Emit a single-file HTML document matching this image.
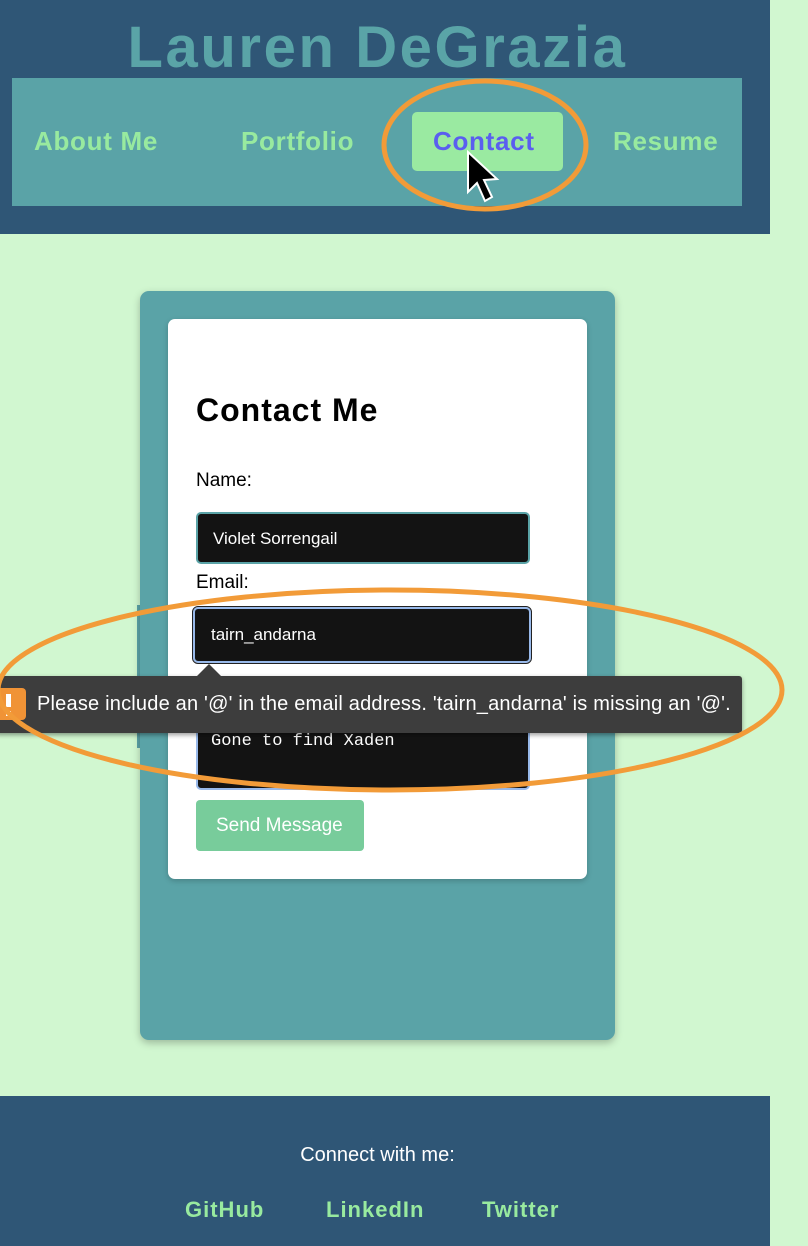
<!DOCTYPE html>
<html><head><style>
*{margin:0;padding:0;box-sizing:border-box}
body{width:808px;height:1246px;background:#d1f7d0;position:relative;overflow:hidden;font-family:"Liberation Sans",sans-serif}
.a{position:absolute}
.nav{font-weight:bold;font-size:26px;color:#98ea9f;top:126px;letter-spacing:0.7px}
.box{background:#131313;color:#fff;border-radius:5px}
.ft{color:#98ea9f;font-weight:bold;font-size:22px;letter-spacing:1px;top:1197px}
</style></head><body>
<div class="a" style="left:0;top:0;width:770px;height:234px;background:#2f5676"></div>
<div class="a" style="left:0;width:755px;top:14px;text-align:center;font-size:58px;font-weight:bold;color:#5aa4a7;letter-spacing:2.6px">Lauren DeGrazia</div>
<div class="a" style="left:12px;top:78px;width:730px;height:128px;background:#5aa3a7"></div>
<div class="a nav" style="left:34px">About Me</div>
<div class="a nav" style="left:241px">Portfolio</div>
<div class="a" style="left:412px;top:112px;width:151px;height:59px;background:#9aeaa1;border-radius:5px"></div>
<div class="a nav" style="left:433px;color:#5a5ef0">Contact</div>
<div class="a nav" style="left:613px">Resume</div>

<div class="a" style="left:137px;top:605px;width:30px;height:143px;background:#5aa3a7"></div>
<div class="a" style="left:140px;top:291px;width:475px;height:749px;background:#5aa3a7;border-radius:9px;box-shadow:0 3px 8px rgba(0,0,0,.25)"></div>
<div class="a" style="left:168px;top:319px;width:419px;height:560px;background:#fff;border-radius:7px;box-shadow:0 2px 6px rgba(0,0,0,.2)"></div>
<div class="a" style="left:196px;top:392px;font-size:32px;font-weight:bold;letter-spacing:1px">Contact Me</div>
<div class="a" style="left:196px;top:470px;font-size:19px">Name:</div>
<div class="a box" style="left:196px;top:512px;width:334px;height:52px;border:2px solid #5aa3a7;font-size:17px;padding:15px 15px">Violet Sorrengail</div>
<div class="a" style="left:196px;top:572px;font-size:19px">Email:</div>
<div class="a box" style="left:193px;top:607px;width:338px;height:56px;border:2px solid #98b9ea;outline:1px solid #222;font-size:17px;padding:16px 16px">tairn_andarna</div>
<div class="a box" style="left:196px;top:715px;width:334px;height:75px;border:2px solid #98b9ea;font-family:'Liberation Mono',monospace;font-size:17px;padding:15px 13px">Gone to find Xaden</div>
<div class="a" style="left:196px;top:800px;width:168px;height:51px;background:#78cc9b;border-radius:4px;color:#fff;font-size:19px;padding:15px 20px">Send Message</div>

<div class="a" style="left:-5px;top:676px;width:747px;height:57px;background:#3d3d3d;border-radius:3px;box-shadow:0 2px 5px rgba(0,0,0,.4)"></div>
<div class="a" style="left:196px;top:664px;width:0;height:0;border-left:13px solid transparent;border-right:13px solid transparent;border-bottom:13px solid #3d3d3d"></div>
<div class="a" style="left:-10px;top:688px;width:36px;height:32px;background:#f09336;border-radius:4px"></div>
<div class="a" style="left:6px;top:694px;width:5px;height:13px;background:#fff"></div>
<div class="a" style="left:6px;top:711px;width:5px;height:5px;background:#fff"></div>
<div class="a" style="left:37px;top:693px;color:#fff;font-size:20px;letter-spacing:0.2px;white-space:nowrap">Please include an '@' in the email address. 'tairn_andarna' is missing an '@'.</div>

<div class="a" style="left:0;top:1096px;width:770px;height:150px;background:#2f5676"></div>
<div class="a" style="left:0;width:755px;top:1144px;text-align:center;color:#fff;font-size:20px">Connect with me:</div>
<div class="a ft" style="left:185px">GitHub</div>
<div class="a ft" style="left:326px">LinkedIn</div>
<div class="a ft" style="left:482px">Twitter</div>

<svg class="a" style="left:0;top:0" width="808" height="1246">
<ellipse cx="485" cy="145" rx="101" ry="64" fill="none" stroke="#f29b38" stroke-width="5"/>
<ellipse cx="390" cy="690" rx="392" ry="100" fill="none" stroke="#f29b38" stroke-width="5"/>
<path d="M468 152 L468 192 L477 183 L485 201 L492 197 L484 180 L497 179 Z" fill="#000" stroke="#fff" stroke-width="2"/>
</svg>
</body></html>
